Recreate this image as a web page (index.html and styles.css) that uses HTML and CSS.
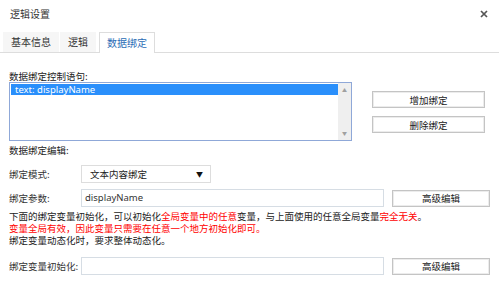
FILE: index.html
```html
<!DOCTYPE html>
<html lang="zh-CN">
<head>
  <meta charset="UTF-8">
  <title>逻辑设置</title>
  <link rel="stylesheet" href="styles.css">
</head>
<body>
  <div class="dialog">
    <div class="titlebar">
      <span class="title">逻辑设置</span>
      <svg class="close" width="8" height="8" viewBox="0 0 8 8">
        <path d="M1 1 L7 7 M7 1 L1 7" stroke="#555" stroke-width="1.7"/>
      </svg>
    </div>

    <div class="tabs">
      <span class="tab">基本信息</span>
      <span class="tab">逻辑</span>
      <span class="tab active">数据绑定</span>
    </div>

    <div class="content">
      <div class="label">数据绑定控制语句:</div>
      <div class="bind-row">
        <div class="listbox">
          <div class="list-items">
            <div class="item selected">text: displayName</div>
          </div>
          <div class="scrollbar">
            <span class="arrow">▲</span>
            <span class="arrow">▼</span>
          </div>
        </div>
        <div class="side-buttons">
          <button class="btn side">增加绑定</button>
          <button class="btn side">删除绑定</button>
        </div>
      </div>

      <div class="label section">数据绑定编辑:</div>

      <div class="field-row first">
        <span class="field-label">绑定模式:</span>
        <div class="select">
          <span>文本内容绑定</span>
          <span class="caret">▼</span>
        </div>
      </div>

      <div class="field-row">
        <span class="field-label">绑定参数:</span>
        <div class="input">displayName</div>
        <button class="btn edit">高级编辑</button>
      </div>

      <div class="notes">
        <div>下面的绑定变量初始化，可以初始化<span class="red">全局变量中的任意</span>变量，与上面使用的任意全局变量<span class="red">完全无关</span>。</div>
        <div class="red">变量全局有效，因此变量只需要在任意一个地方初始化即可。</div>
        <div>绑定变量动态化时，要求整体动态化。</div>
      </div>

      <div class="field-row last">
        <span class="field-label">绑定变量初始化:</span>
        <div class="input"></div>
        <button class="btn edit">高级编辑</button>
      </div>
    </div>
  </div>
</body>
</html>
```

FILE: styles.css
```css
body {
  margin: 0;
  background: #fff;
  font-family: "Noto Sans CJK SC", "Noto Sans", sans-serif;
  font-size: 9.5px;
  color: #222;
}
.dialog {
  width: 499px;
  height: 295px;
  background: #fff;
}
.titlebar {
  height: 26px;
  display: flex;
  align-items: center;
  justify-content: space-between;
  padding: 0 11px 0 10px;
}
.title {
  color: #333;
  font-size: 10px;
}
.close {
  margin-top: 2px;
}
.tabs {
  margin-top: 6px;
  padding-left: 3px;
  display: flex;
  border-bottom: 1px solid #ddd;
  height: 20px;
}
.tab {
  height: 20px;
  line-height: 20px;
  padding: 0 8px;
  margin-right: 1px;
  background: #f6f6f6;
  color: #333;
  font-size: 10px;
}
.tab.active {
  margin-left: 2px;
  background: #fff;
  color: #2b6cb5;
  border: 1px solid #ddd;
  border-bottom: none;
  line-height: 19px;
  padding: 0 7px;
}
.content {
  padding: 17px 9px 0 9px;
}
.label {
  line-height: 12px;
}
.label.section {
  margin-top: 3px;
}
.bind-row {
  display: flex;
  gap: 20px;
}
.listbox {
  width: 341px;
  height: 57px;
  border: 1px solid #8fa8d8;
  display: flex;
}
.list-items {
  flex: 1;
  padding: 1px 0 0 1px;
}
.item {
  height: 11px;
  line-height: 11px;
  padding-left: 4px;
  font-family: "Noto Sans", sans-serif;
}
.item.selected {
  background: #2a8ffb;
  color: #fff;
}
.scrollbar {
  width: 13px;
  background: #efefef;
  display: flex;
  flex-direction: column;
  justify-content: space-between;
  align-items: center;
  padding: 4px 0;
}
.arrow {
  font-size: 5px;
  color: #a0a0a0;
  line-height: 6px;
}
.side-buttons {
  display: flex;
  flex-direction: column;
  gap: 8px;
  padding-top: 9px;
}
.btn {
  font-family: "Noto Sans CJK SC", "Noto Sans", sans-serif;
  font-size: 9.5px;
  color: #222;
  background: #fff;
  border: 1px solid #c4c4c4;
  box-shadow: inset 0 0 0 1px #ececec;
  padding: 0;
  height: 17px;
  line-height: 14px;
}
.btn.side {
  width: 113px;
}
.btn.edit {
  width: 98px;
  margin-left: 8px;
}
.field-row {
  display: flex;
  align-items: center;
  margin-top: 6px;
}
.field-row.first {
  margin-top: 9px;
}
.field-row.last {
  margin-top: 11px;
}
.field-label {
  width: 72px;
  white-space: nowrap;
  color: #333;
}
.select {
  width: 130px;
  height: 18px;
  box-sizing: border-box;
  border: 1px solid #ddd;
  display: flex;
  align-items: center;
  justify-content: space-between;
  padding: 0 7px 0 8px;
}
.caret {
  font-size: 7px;
  color: #111;
}
.input {
  width: 303px;
  height: 18px;
  box-sizing: border-box;
  border: 1px solid #d6dde4;
  line-height: 16px;
  padding-left: 3px;
  font-family: "Noto Sans", sans-serif;
  color: #333;
}
.notes {
  margin-top: 3px;
  line-height: 12px;
}
.red {
  color: #f00;
}
```
